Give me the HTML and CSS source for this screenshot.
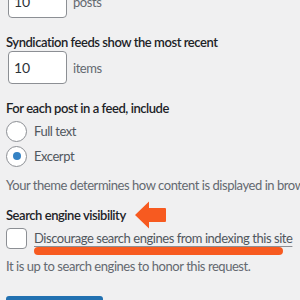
FILE: index.html
```html
<!DOCTYPE html>
<html>
<head>
    <title>Reading Settings</title>
    <link rel="stylesheet" href="styles.css">
</head>
<body>
    <div class="page">
        <div class="field-row first">
            <input class="num" type="text" value="10">
            <span class="unit">posts</span>
        </div>

        <div class="heading">Syndication feeds show the most recent</div>
        <div class="field-row">
            <input class="num" type="text" value="10">
            <span class="unit">items</span>
        </div>

        <div class="heading h-feed">For each post in a feed, include</div>
        <label class="choice c1">
            <span class="radio"></span>
            <span>Full text</span>
        </label>
        <label class="choice c2">
            <span class="radio checked"></span>
            <span>Excerpt</span>
        </label>
        <p class="note n1">Your theme determines how content is displayed in browsers.</p>

        <div class="heading h-search">Search engine visibility</div>
        <label class="check-row">
            <span class="checkbox"></span>
            <span class="discourage">Discourage search engines from indexing this site</span>
        </label>
        <p class="note n2">It is up to search engines to honor this request.</p>

        <button class="save">Save Changes</button>

        <!-- annotation overlays -->
        <svg class="arrow" width="34" height="30" viewBox="0 0 34 30">
            <path d="M2 15 L16 1.5 L16 8 L32 8 Q33 8 33 9 L33 21 Q33 22 32 22 L16 22 L16 28.5 Z" fill="#f75a20"/>
        </svg>
        <div class="mark"></div>
    </div>
</body>
</html>
```

FILE: styles.css
```css
body {
    margin: 0;
    padding: 0;
    background-color: #f0f0f1;
    font-family: "Segoe UI", Lato, "Noto Sans", sans-serif;
    font-size: 13px;
    letter-spacing: -0.45px;
    color: #1d2327;
    overflow: hidden;
}

.page {
    position: relative;
    display: flow-root;
    padding-left: 6px;
    white-space: nowrap;
}

.field-row {
    display: flex;
    align-items: center;
    gap: 6px;
    height: 33px;
    margin-left: 2px;
}

.field-row.first {
    margin-top: -15px;
}

.field-row + .heading {
    margin-top: 15px;
}

.num {
    box-sizing: border-box;
    flex-shrink: 0;
    width: 59px;
    height: 33px;
    padding: 0 5px;
    border: 1px solid #8c8f94;
    border-radius: 4px;
    background: #ffffff;
    font-family: inherit;
    font-size: 14px;
    color: #2c3338;
}

.unit {
    color: #646970;
}

.heading {
    font-weight: 600;
    line-height: 18px;
    margin-top: 16px;
}

.h-feed {
    margin-top: 14px;
}

.choice {
    display: flex;
    align-items: center;
    gap: 7px;
    height: 24px;
}

.c1 {
    margin-top: 2px;
}

.c2 {
    margin-top: 1px;
}

.radio {
    box-sizing: border-box;
    flex-shrink: 0;
    width: 21px;
    height: 21px;
    border: 1px solid #8c8f94;
    border-radius: 50%;
    background: #ffffff;
    display: flex;
    align-items: center;
    justify-content: center;
}

.radio.checked::before {
    content: "";
    width: 8px;
    height: 8px;
    border-radius: 50%;
    background: #3582c4;
}

.choice span:last-child {
    color: #50575e;
}

.note {
    margin: 7px 0 0;
    line-height: 20px;
    color: #646970;
}

.h-search {
    margin-top: 11px;
}

.check-row {
    display: flex;
    align-items: center;
    gap: 7px;
    height: 22px;
    margin-top: 3px;
}

.checkbox {
    box-sizing: border-box;
    flex-shrink: 0;
    width: 21px;
    height: 21px;
    border: 1px solid #8c8f94;
    border-radius: 4px;
    background: #ffffff;
}

.discourage {
    color: #50575e;
    text-decoration: underline;
    text-decoration-color: #8c8f94;
    text-underline-offset: 3px;
}

.n2 {
    margin-top: 7px;
}

.save {
    display: block;
    margin-top: 20px;
    width: 97px;
    height: 32px;
    border: none;
    border-radius: 3px;
    background: #2271b1;
    color: #ffffff;
    font-family: inherit;
    font-size: 13px;
}

.arrow {
    position: absolute;
    left: 133px;
    top: 200px;
}

.mark {
    position: absolute;
    left: 34px;
    top: 247px;
    width: 249px;
    height: 8px;
    border-radius: 4px;
    background: #f75a20;
}
```
